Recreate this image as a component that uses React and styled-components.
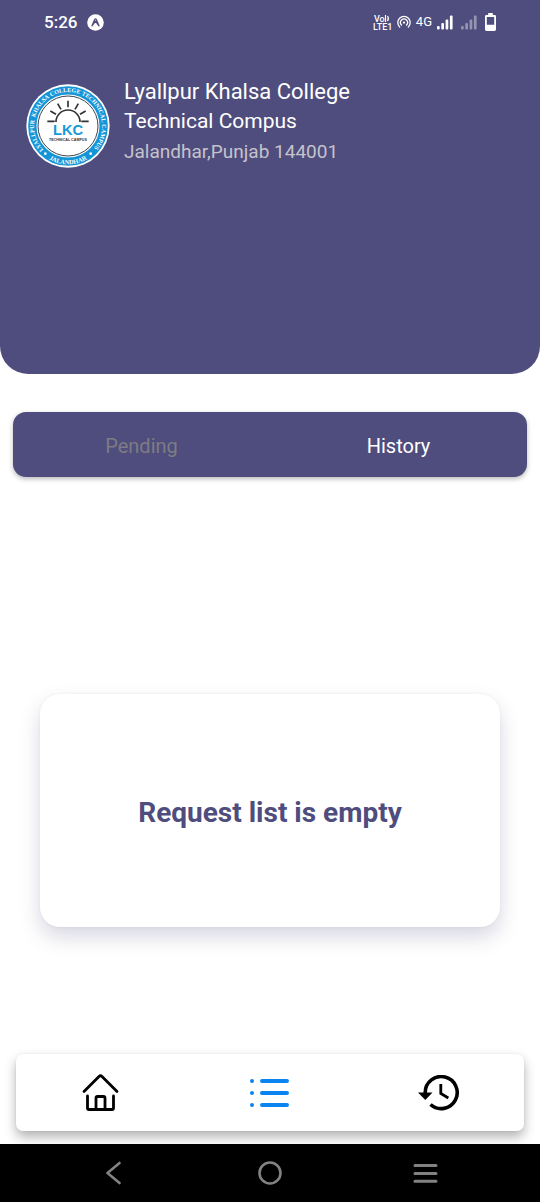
import React from "react";
import styled, { createGlobalStyle } from "styled-components";

const purple = "#4f4d7d";

const GlobalStyle = createGlobalStyle`
  * { box-sizing: border-box; }
  body { margin: 0; background: #fff; font-family: Roboto, "Liberation Sans", sans-serif; }
  h1, h2, p { margin: 0; }
  svg { display: block; flex: none; }
`;

const Screen = styled.div`
  min-height: 100vh;
  display: flex;
  flex-direction: column;
`;

const Header = styled.header`
  min-height: 374px;
  background: ${purple};
  border-radius: 0 0 28px 28px;
  color: #fff;
`;

const StatusBar = styled.div`
  height: 44px;
  padding: 0 44px;
  display: flex;
  align-items: center;
  justify-content: space-between;
`;

const StatusGroup = styled.div`
  display: flex;
  align-items: center;
  gap: ${(p) => p.$gap}px;
`;

const Clock = styled.time`
  font-size: 17px;
  font-weight: 500;
  line-height: 20px;
`;

const NetworkType = styled.span`
  font-size: 13px;
  line-height: 16px;
`;

const Profile = styled.div`
  display: flex;
  align-items: flex-end;
  gap: 14px;
  padding: 33px 26px 0;
`;

const CollegeName = styled.h1`
  font-size: 22px;
  font-weight: 400;
  line-height: 29px;
`;

const CampusName = styled.p`
  font-size: 21px;
  line-height: 30px;
`;

const Address = styled.p`
  font-size: 19px;
  line-height: 24px;
  padding: 4px 0;
  color: #c5c3cb;
`;

const Tabs = styled.div`
  margin: 38px 13px 0;
  height: 65px;
  display: flex;
  border-radius: 13px;
  background: ${purple};
  box-shadow: 0 2px 5px rgba(0, 0, 0, 0.28);
`;

const Tab = styled.button`
  flex: 1;
  border: 0;
  padding: 2px 0 0;
  background: none;
  font: 400 20px/24px Roboto, "Liberation Sans", sans-serif;
  color: ${(p) => (p.$active ? "#fff" : "#7d7b83")};
`;

const Content = styled.main`
  flex: 1;
  display: flex;
  flex-direction: column;
  justify-content: center;
  padding: 90px 40px 0;
`;

const EmptyCard = styled.section`
  min-height: 233px;
  display: flex;
  align-items: center;
  justify-content: center;
  border-radius: 20px;
  background: #fff;
  box-shadow: 0 10px 20px rgba(79, 76, 124, 0.22), 0 0 3px rgba(79, 76, 124, 0.08);
`;

const EmptyTitle = styled.h2`
  font-size: 28px;
  font-weight: 700;
  line-height: 32px;
  padding-top: 4px;
  color: ${purple};
`;

const BottomNav = styled.nav`
  margin: 0 16px 13px;
  height: 77px;
  display: flex;
  border-radius: 7px;
  background: #fff;
  box-shadow: 0 6px 12px rgba(0, 0, 0, 0.3), 0 0 2px rgba(0, 0, 0, 0.08);
`;

const NavButton = styled.button`
  flex: 1;
  display: flex;
  align-items: center;
  justify-content: center;
  border: 0;
  padding: 0;
  background: none;
  color: ${(p) => (p.$active ? "#0a84f0" : "#000")};
`;

const SystemBar = styled.footer`
  height: 58px;
  padding: 0 36px;
  display: flex;
  background: #000;
`;

const SystemButton = styled(NavButton)`
  color: #828282;
`;

function ExpoIcon() {
  return (
    <svg width="17" height="17" viewBox="0 0 17 17">
      <circle cx="8.5" cy="8.5" r="8.3" fill="#fff" />
      <path d="M5 11.800 7.700 5.500q.8-1.400 1.600 0L12 11.800M5.200 11.500 8.500 7.200 11.800 11.500" fill="none" stroke={purple} strokeWidth="1.300" strokeLinecap="round" strokeLinejoin="round" />
    </svg>
  );
}

function VolteIcon() {
  return (
    <svg width="19" height="17" viewBox="0 0 19 17" fill="#fff" fontFamily="Roboto, sans-serif" fontWeight="500">
      <text x="1" y="8" fontSize="9">Vo</text>
      <path d="M12.500 1v7M14.500 2q1.800 2.500 0 5" stroke="#fff" strokeWidth="1.200" fill="none" />
      <text x="0" y="16" fontSize="9">LTE1</text>
    </svg>
  );
}

function HotspotIcon() {
  return (
    <svg width="14" height="14" viewBox="0 0 14 14" fill="none" stroke="#fff" strokeWidth="1.300" strokeLinecap="round">
      <path d="M2.700 12A6.200 6.200 0 1 1 11.300 12M4.500 10A3.500 3.500 0 1 1 9.500 10" />
      <circle cx="7" cy="7.600" r="0.500" fill="#fff" />
    </svg>
  );
}

function SignalIcon({ dim }) {
  return (
    <svg width="16" height="15" viewBox="0 0 16 15" fill="#fff" opacity={dim ? 0.4 : 1}>
      <rect x="0" y="11" width="2.700" height="3.500" rx="1" />
      <rect x="4.300" y="8" width="2.700" height="6.500" rx="1" />
      <rect x="8.600" y="4.500" width="2.700" height="10" rx="1" />
      <rect x="12.900" y="0.500" width="2.700" height="14" rx="1" />
    </svg>
  );
}

function BatteryIcon() {
  return (
    <svg width="11" height="18" viewBox="0 0 11 18">
      <path d="M3.2 0h4.6v2H9.6q1.4 0 1.4 1.4v13.2q0 1.4-1.4 1.4H1.4Q0 18 0 16.600V3.400Q0 2 1.400 2h1.800zM1.800 4v7.800h7.400V4z" fill="#fff" fillRule="evenodd" />
    </svg>
  );
}

const ringWords = [
  ["LYALLPUR", 0],
  ["KHALSA", 104],
  ["COLLEGE", 185],
  ["TECHNICAL", 279],
  ["CAMPUS", 393],
];

function CollegeLogo() {
  return (
    <svg width="84" height="84" viewBox="0 0 252 252" role="img" aria-label="Lyallpur Khalsa College Technical Campus">
      <defs>
        <path id="ring-top" d="M52.600 196.900A102 102 0 1 1 199.400 196.900" />
        <path id="ring-bottom" d="M38 200A115 115 0 0 0 214 200" />
      </defs>
      <circle cx="126" cy="126" r="125" fill="#fff" />
      <circle cx="126" cy="126" r="107" fill="none" stroke="#1495d8" strokeWidth="25" />
      <circle cx="126" cy="126" r="90" fill="#fff" stroke="#38454e" strokeWidth="3" />
      <g fill="#fff" fontFamily="Liberation Serif, serif" fontWeight="700">
        {ringWords.map(([word, offset]) => (
          <text key={word} fontSize="18"><textPath href="#ring-top" startOffset={offset}>{word}</textPath></text>
        ))}
        <text fontSize="19" textAnchor="middle"><textPath href="#ring-bottom" startOffset="50%">JALANDHAR</textPath></text>
        <circle cx="58" cy="209" r="4" />
        <circle cx="194" cy="209" r="4" />
      </g>
      <g fill="none" stroke="#333" strokeWidth="5">
        <path d="M90 114A36 36 0 0 1 162 114" />
        <path d="M64 112h22M166 112h22M73 81l17 10M179 81l-17 10M95 59l10 17M157 59l-10 17M126 50v20" />
      </g>
      <g textAnchor="middle" fontFamily="Liberation Sans, sans-serif" fontWeight="700">
        <text x="126" y="152" fontSize="44" fill="#159bd7">LKC</text>
        <text x="126" y="171" fontSize="11" fill="#333">TECHNICAL CAMPUS</text>
      </g>
    </svg>
  );
}

function HomeIcon() {
  return (
    <svg width="38" height="40" viewBox="0 0 38 40" fill="none" stroke="currentColor" strokeWidth="2.800" strokeLinecap="round" strokeLinejoin="round">
      <path d="M2 18.500 17 3.500q1.500-1.400 3 0l15 15" />
      <path d="M5.500 23v12q0 1.500 1.500 1.500h23q1.500 0 1.500-1.500v-12" />
      <path d="M14 36.500v-11.500q0-1.500 1.500-1.500h6q1.500 0 1.500 1.500V36.500" />
    </svg>
  );
}

function ListIcon() {
  return (
    <svg width="40" height="30" viewBox="0 0 40 30" fill="none" stroke="currentColor" strokeWidth="4" strokeLinecap="round">
      <path d="M12 3h25M12 15h25M12 27h25M2 3h.010M2 15h.010M2 27h.010" />
    </svg>
  );
}

function HistoryIcon() {
  return (
    <svg width="42" height="36" viewBox="0 0 42 36" fill="none" stroke="currentColor">
      <path d="M7.200 19V17.500A16 16 0 1 1 12.500 29.500" strokeWidth="3.600" />
      <path d="M0 17.500h14.500l-7.200 7.500z" fill="currentColor" stroke="none" />
      <path d="M22.800 9v9.500l7.500 4.500" strokeWidth="2.800" />
    </svg>
  );
}

function BackIcon() {
  return (
    <svg width="16" height="24" viewBox="0 0 16 24" fill="none" stroke="currentColor" strokeWidth="2.600" strokeLinecap="round" strokeLinejoin="round">
      <path d="M13.500 2 1.500 12l12 10" />
    </svg>
  );
}

function CircleIcon() {
  return (
    <svg width="24" height="24" viewBox="0 0 24 24" fill="none" stroke="currentColor" strokeWidth="2.600">
      <circle cx="12" cy="12" r="10.500" />
    </svg>
  );
}

function MenuIcon() {
  return (
    <svg width="26" height="20" viewBox="0 0 26 20" fill="none" stroke="currentColor" strokeWidth="3" strokeLinecap="round">
      <path d="M2 2.500h21M2 10.500h21M2 18.300h21" />
    </svg>
  );
}

export default function App() {
  return (
    <Screen>
      <GlobalStyle />
      <Header>
        <StatusBar>
          <StatusGroup $gap={10}>
            <Clock>5:26</Clock>
            <ExpoIcon />
          </StatusGroup>
          <StatusGroup $gap={8}>
            <StatusGroup $gap={5}>
              <VolteIcon />
              <HotspotIcon />
              <NetworkType>4G</NetworkType>
              <SignalIcon />
            </StatusGroup>
            <SignalIcon dim />
            <BatteryIcon />
          </StatusGroup>
        </StatusBar>
        <Profile>
          <CollegeLogo />
          <div>
            <CollegeName>Lyallpur Khalsa College</CollegeName>
            <CampusName>Technical Compus</CampusName>
            <Address>Jalandhar,Punjab 144001</Address>
          </div>
        </Profile>
      </Header>
      <Tabs>
        <Tab type="button">Pending</Tab>
        <Tab type="button" $active>History</Tab>
      </Tabs>
      <Content>
        <EmptyCard>
          <EmptyTitle>Request list is empty</EmptyTitle>
        </EmptyCard>
      </Content>
      <BottomNav aria-label="Main">
        <NavButton type="button" aria-label="Home"><HomeIcon /></NavButton>
        <NavButton type="button" aria-label="Requests" $active><ListIcon /></NavButton>
        <NavButton type="button" aria-label="History"><HistoryIcon /></NavButton>
      </BottomNav>
      <SystemBar>
        <SystemButton type="button" aria-label="Back"><BackIcon /></SystemButton>
        <SystemButton type="button" aria-label="Home screen"><CircleIcon /></SystemButton>
        <SystemButton type="button" aria-label="Recent apps"><MenuIcon /></SystemButton>
      </SystemBar>
    </Screen>
  );
}
